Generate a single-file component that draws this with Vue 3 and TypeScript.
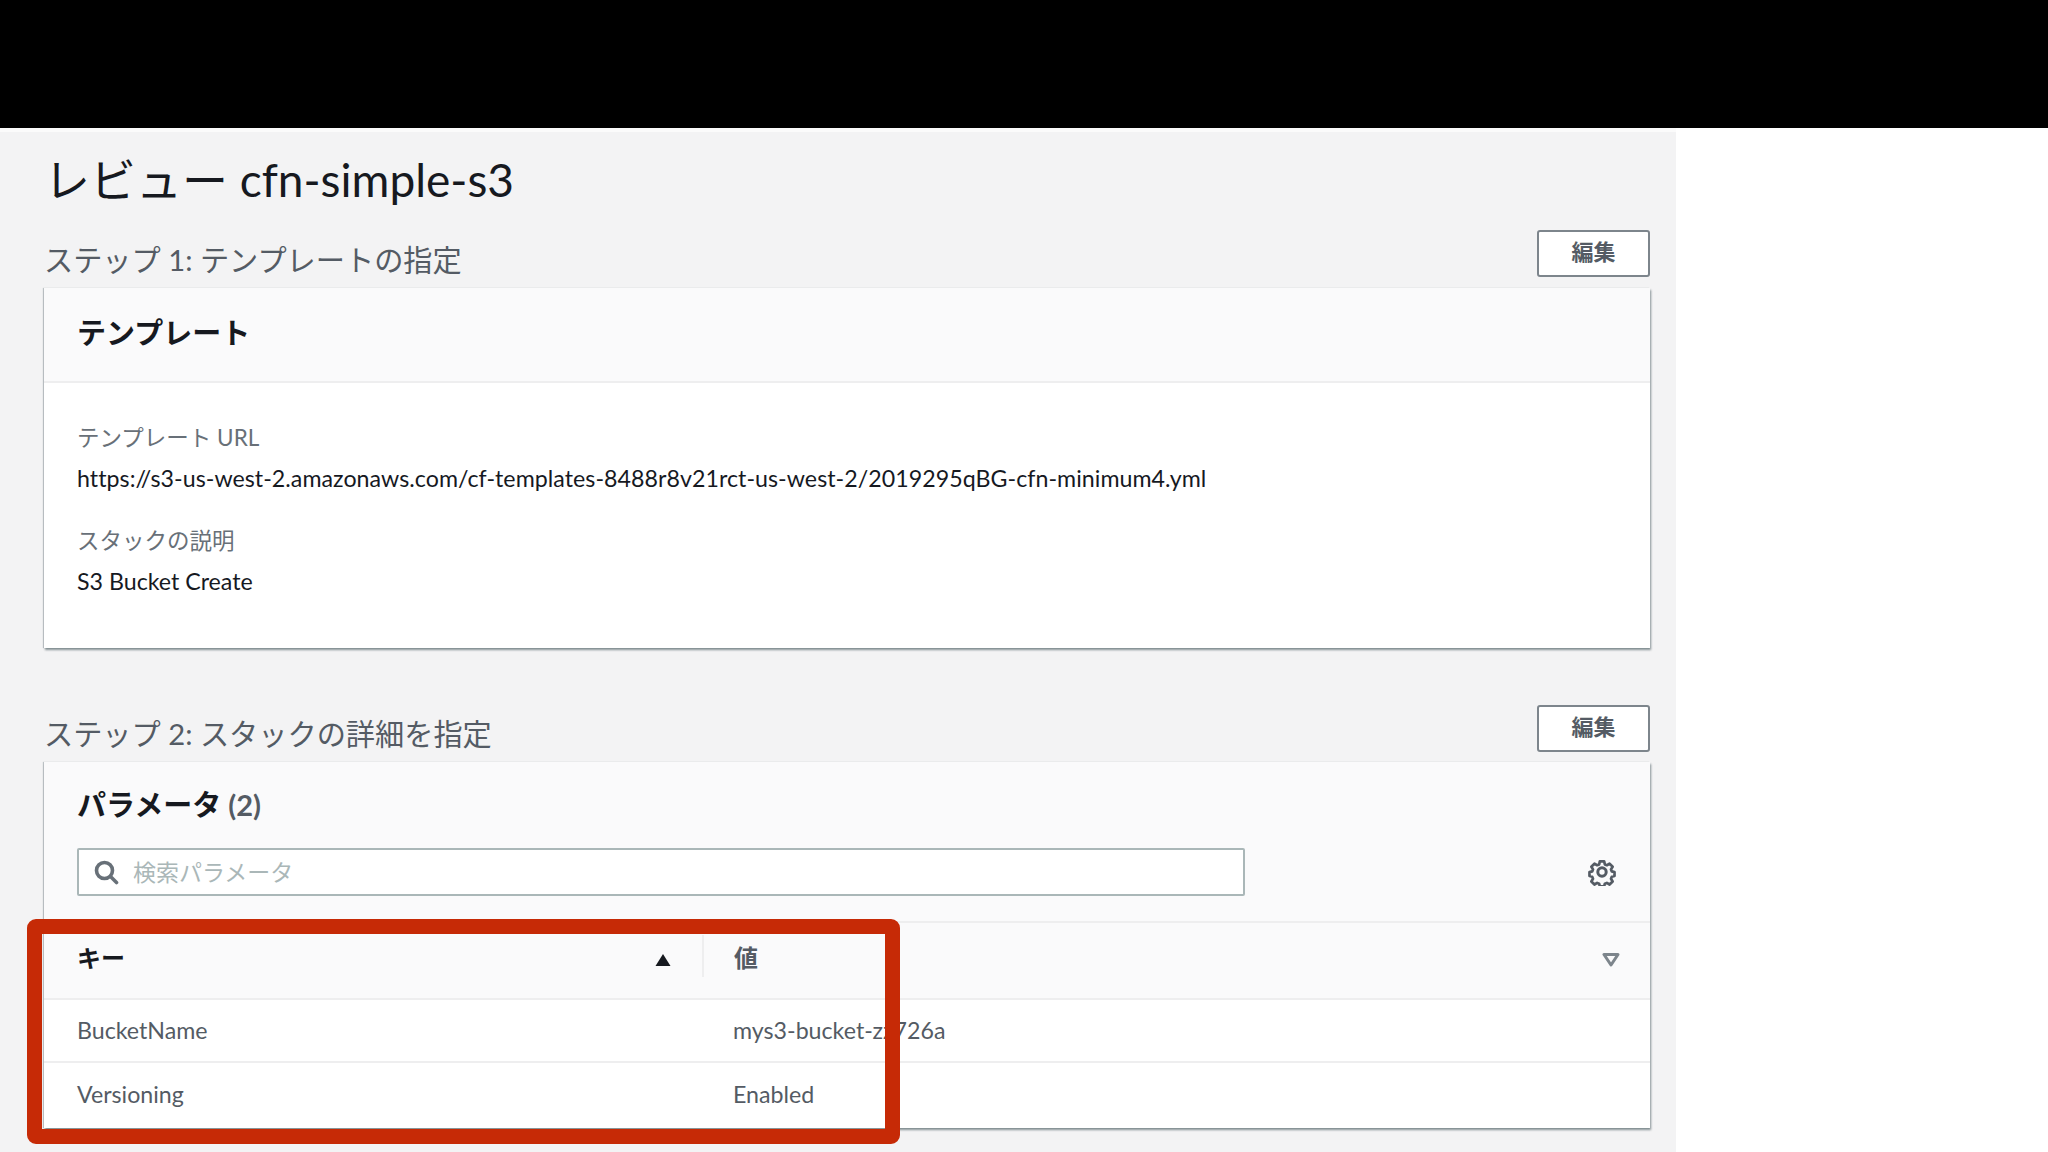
<script setup lang="ts">
interface Row { k: string; v: string }
const rows: Row[] = [
  { k: 'BucketName', v: 'mys3-bucket-zz726a' },
  { k: 'Versioning', v: 'Enabled' },
]
</script>

<template>
  <div class="screen">
    <div class="topbar"></div>
    <div class="strip"></div>
    <div class="page">
      <h1 class="title">レビュー cfn-simple-s3</h1>

      <div class="section-head first">
        <h2>ステップ 1: テンプレートの指定</h2>
        <button class="edit">編集</button>
      </div>
      <section class="card card-one">
        <div class="card-head"><h3>テンプレート</h3></div>
        <div class="card-body">
          <div class="label">テンプレート URL</div>
          <div class="value url">https://s3-us-west-2.amazonaws.com/cf-templates-8488r8v21rct-us-west-2/2019295qBG-cfn-minimum4.yml</div>
          <div class="label second">スタックの説明</div>
          <div class="value">S3 Bucket Create</div>
        </div>
      </section>

      <div class="section-head second-head">
        <h2>ステップ 2: スタックの詳細を指定</h2>
        <button class="edit">編集</button>
      </div>
      <section class="card card-two">
        <div class="params-head">
          <h3>パラメータ <span class="count">(2)</span></h3>
          <div class="search-row">
            <div class="search">
              <svg class="mag" width="26" height="26" viewBox="0 0 26 26" fill="none" stroke="#687078" stroke-width="3.6" stroke-linecap="round">
                <circle cx="11.5" cy="11.5" r="8" />
                <path d="M17.5 17.5 L23.5 23.5" />
              </svg>
              <span class="placeholder">検索パラメータ</span>
            </div>
            <svg class="gear" width="28" height="28" viewBox="0 0 28 28" fill="none" stroke="#545b64">
              <path stroke-width="3" stroke-linejoin="round" d="M11.6 2.2h4.8l.8 3.4 2.2.9 3-1.8 3.4 3.4-1.8 3 .9 2.2 3 .8v4.4l-3 .8-.9 2.2 1.8 3-3.4 3.4-3-1.8-2.2.9-.8 2.9h-4.8l-.8-2.9-2.2-.9-3 1.8-3.4-3.4 1.8-3-.9-2.2-3-.8v-4.4l3-.8.9-2.2-1.8-3 3.4-3.4 3 1.8 2.2-.9z" transform="translate(1.4 1.4) scale(.9)" />
              <circle cx="14" cy="14" r="4.2" stroke-width="3" />
            </svg>
          </div>
        </div>
        <div class="thead">
          <div class="th key">
            <span>キー</span>
            <svg class="sort" width="16" height="14" viewBox="0 0 16 14"><path d="M8 1 L15.5 13 H.5 Z" fill="#16191f" /></svg>
          </div>
          <div class="th val">
            <span>値</span>
            <svg class="sort-off" width="18" height="14" viewBox="0 0 18 14" fill="none"><path d="M2 1.5 H16 L9 12 Z" stroke="#7d858c" stroke-width="3" stroke-linejoin="round" /></svg>
          </div>
        </div>
        <div v-for="r in rows" :key="r.k" class="tr">
          <div class="td td-key">{{ r.k }}</div>
          <div class="td">{{ r.v }}</div>
        </div>
      </section>
    </div>
    <div class="highlight"></div>
  </div>
</template>

<style>
html, body { margin: 0; background: #fff; overflow: hidden; }
</style>

<style scoped>
.screen {
  position: relative;
  width: 2048px;
  height: 1152px;
  overflow: hidden;
  background: #fff;
  font-family: "Lato", "Noto Sans CJK JP", sans-serif;
  color: #16191f;
}
.topbar { height: 128px; background: #000; }
.strip { height: 4px; background: #fbfbfb; width: 1676px; }
.page {
  width: 1676px;
  height: 1020px;
  box-sizing: border-box;
  background: #f3f3f4;
  padding: 0 26px 0 44px;
}
h1, h2, h3 { margin: 0; }
.title {
  font-size: 46px;
  font-weight: 400;
  line-height: 60px;
  height: 60px;
  padding-top: 18px;
  color: #16191f;
}
.section-head {
  display: flex;
  justify-content: space-between;
  align-items: flex-end;
  height: 47px;
  margin-bottom: 11px;
}
.section-head.first { margin-top: 20px; }
.section-head.second-head { margin-bottom: 10px; }
.section-head.second-head h2 { margin-bottom: -2px; }
.section-head h2 {
  font-size: 29.2px;
  font-weight: 400;
  line-height: 40px;
  color: #545b64;
  margin-bottom: -3px;
}
.edit {
  width: 113px;
  height: 47px;
  box-sizing: border-box;
  background: #fff;
  border: 2px solid #7d858c;
  border-radius: 3px;
  color: #545b64;
  font: 700 22px "Lato", "Noto Sans CJK JP", sans-serif;
  padding: 0 0 7px;
}
.card {
  background: #fff;
  box-shadow: 1px 2px 2px rgba(0, 28, 36, .45), -1px 0 1px rgba(0, 28, 36, .22);
}
.card-one { height: 360px; margin-bottom: 57px; }
.card-head {
  height: 95px;
  box-sizing: border-box;
  background: #fafafb;
  border-bottom: 2px solid #eeeeef;
  padding: 25px 33px 0;
}
h3 { font-size: 29px; font-weight: 700; line-height: 40px; color: #16191f; }
.card-body { padding: 39px 33px 0 33px; }
.label { font-size: 22.5px; line-height: 32px; color: #687078; }
.label.second { margin-top: 31px; }
.value { font-size: 23.2px; line-height: 32px; margin-top: 8px; color: #16191f; }
.value.url { letter-spacing: .04px; }
.card-two { height: 366px; display: flex; flex-direction: column; }
.params-head {
  height: 161px;
  box-sizing: border-box;
  background: #fafafb;
  border-bottom: 2px solid #eeeeef;
  padding: 23px 33px 0;
}
.count { color: #545b64; }
.search-row {
  display: flex;
  align-items: center;
  justify-content: space-between;
  margin-top: 23px;
  padding-right: 1px;
}
.search {
  width: 1168px;
  height: 48px;
  box-sizing: border-box;
  border: 2px solid #aab7b8;
  border-radius: 2px;
  background: #fff;
  display: flex;
  align-items: center;
  padding-left: 14px;
  gap: 14px;
}
.placeholder { font-size: 23px; color: #aab7b8; padding-bottom: 3px; }
.thead {
  height: 77px;
  box-sizing: border-box;
  display: flex;
  background: #fafafb;
  border-bottom: 2px solid #eeeeef;
}
.th {
  font-size: 24px;
  font-weight: 700;
  line-height: 32px;
  display: flex;
  justify-content: space-between;
  padding-top: 19px;
  box-sizing: border-box;
}
.th.key { width: 658px; padding-left: 33px; padding-right: 31px; }
.th.val {
  flex: 1;
  padding-left: 32px;
  padding-right: 30px;
  color: #545b64;
  background-image: linear-gradient(#eeeeef, #eeeeef);
  background-repeat: no-repeat;
  background-size: 2px 42px;
  background-position: 0 12px;
}
.sort { margin-top: 11px; }
.sort-off { margin-top: 11px; }
.tr {
  height: 63px;
  box-sizing: border-box;
  display: flex;
  align-items: center;
  border-bottom: 2px solid #eeeeef;
  font-size: 23.2px;
  color: #545b64;
}
.tr:last-child { border-bottom: 0; }
.td { flex: 1; padding-left: 31px; padding-bottom: 2px; }
.td-key { flex: 0 0 658px; box-sizing: border-box; padding-left: 33px; }
.highlight {
  position: absolute;
  left: 27px;
  top: 919px;
  width: 873px;
  height: 225px;
  box-sizing: border-box;
  border: 15px solid #c62a06;
  border-radius: 9px;
}
</style>
